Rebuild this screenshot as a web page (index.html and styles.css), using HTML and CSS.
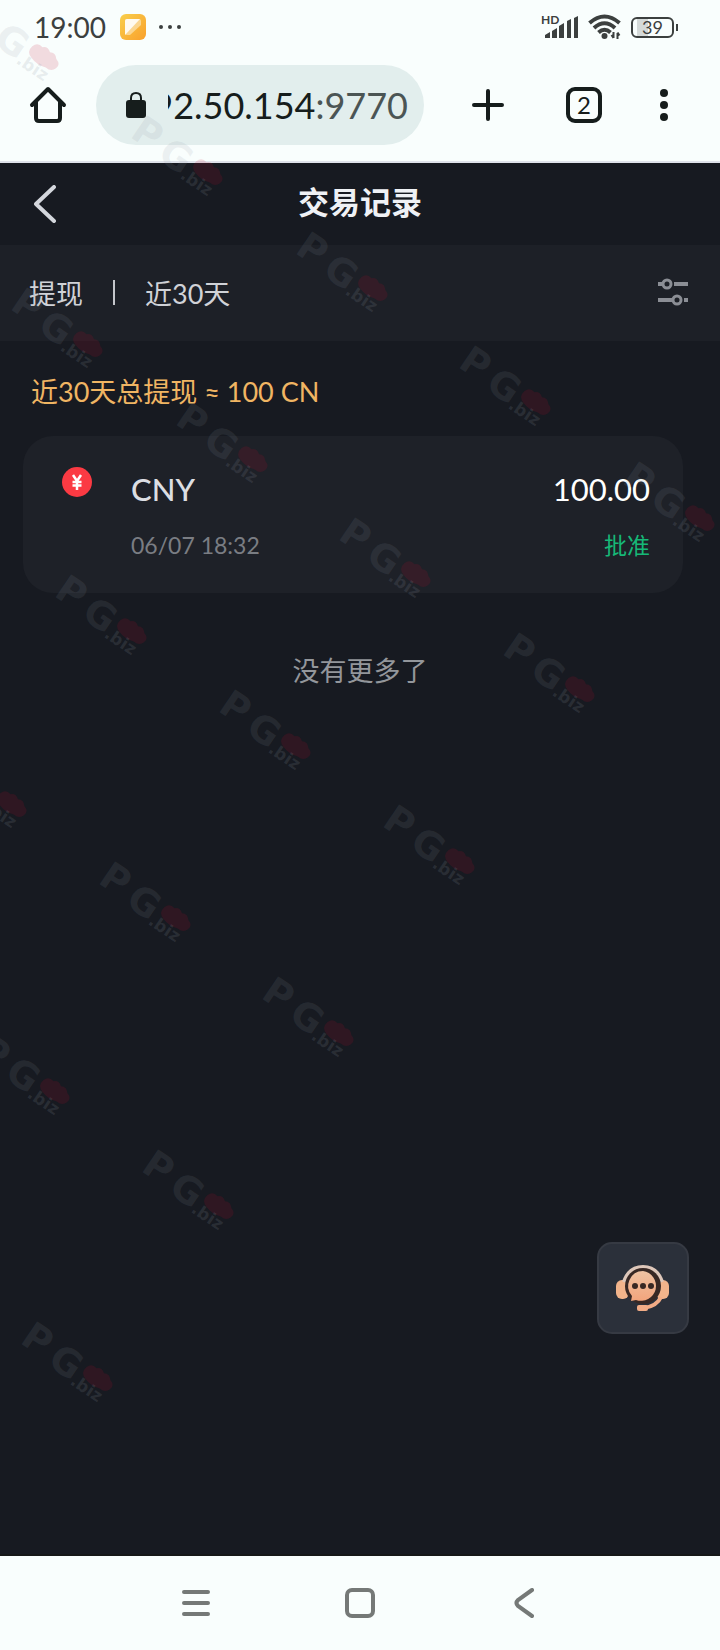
FILE: index.html
```
<!DOCTYPE html>
<html lang="zh-CN">
<head>
    <meta charset="UTF-8">
    <meta name="viewport" content="width=device-width, initial-scale=1.0">
    <title>交易记录</title>
    <link rel="stylesheet" href="styles.css">
</head>
<body>

    <!-- Phone status bar -->
    <div class="status-bar">
        <span class="status-time">19:00</span>
        <svg class="status-app" width="26" height="26" viewBox="0 0 26 26">
            <defs>
                <linearGradient id="app-bg" x1="0" y1="0" x2="1" y2="1">
                    <stop offset="0" stop-color="#f9cf4c"/>
                    <stop offset="1" stop-color="#f9a02c"/>
                </linearGradient>
            </defs>
            <rect width="26" height="26" rx="6" fill="url(#app-bg)"/>
            <path d="M5 7q0-2 2-2h12q2 0 2 2v4L10 21H7q-2 0-2-2z" fill="#fbd690"/>
            <path d="M5 7q0-2 2-2h13L5 21z" fill="#fffaf0"/>
        </svg>
        <svg width="24" height="6" viewBox="0 0 24 6" fill="#3c403f">
            <circle cx="3" cy="3" r="2"/><circle cx="12" cy="3" r="2"/><circle cx="21" cy="3" r="2"/>
        </svg>
        <div class="status-right">
            <div class="signal">
                <span class="signal-hd">HD</span>
                <svg width="36" height="24" viewBox="0 0 36 24" fill="#3c403f">
                    <path d="M2 20l5-3v6H2zM9 16l5-3v10H9zM16 11l5-3v15h-5zM24 6l4-2v19h-4zM31 3l4-2v22h-4z"/>
                </svg>
            </div>
            <svg width="34" height="26" viewBox="0 0 34 26" fill="none" stroke="#3c403f" stroke-width="4">
                <path d="M1.500 9Q16.500-4 31.500 9M6 14Q16.500 4.500 27 14M10.500 18.500Q16.500 13 22.500 18.500"/>
                <circle cx="16.500" cy="22" r="3" fill="#3c403f" stroke="none"/>
                <path d="M25.500 18v6M29.500 19v6M25.500 24l-2-3M29.500 18.500l2 3" stroke-width="2"/>
            </svg>
            <div class="battery"><span>39</span></div>
        </div>
    </div>

    <!-- Browser toolbar -->
    <div class="toolbar">
        <button class="tool-btn tool-wide" aria-label="Home">
            <svg width="38" height="38" viewBox="0 0 38 38" fill="none" stroke="#161d1c" stroke-width="4" stroke-linejoin="round" stroke-linecap="round">
                <path d="M3 19L19 3l16 16M7 16v16q0 3 3 3h18q3 0 3-3V16"/>
            </svg>
        </button>
        <button class="address" aria-label="Address">
            <svg class="lock" width="20" height="26" viewBox="0 0 20 26">
                <path d="M5 10V6q0-5 5-5t5 5v4" fill="none" stroke="#161d1c" stroke-width="2"/>
                <rect y="8" width="20" height="18" rx="3" fill="#161d1c"/>
            </svg>
            <span class="url"><span>92.50.154</span><span class="port">:9770</span></span>
        </button>
        <button class="tool-btn tool-new" aria-label="New tab">
            <svg width="32" height="32" viewBox="0 0 32 32" stroke="#161d1c" stroke-width="4" stroke-linecap="round">
                <path d="M16 2v28M2 16h28"/>
            </svg>
        </button>
        <button class="tool-btn tool-tabs" aria-label="Tabs"><span class="tab-count">2</span></button>
        <button class="tool-btn tool-wide" aria-label="Menu">
            <svg width="8" height="32" viewBox="0 0 8 32" fill="#161d1c">
                <circle cx="4" cy="4" r="4"/><circle cx="4" cy="16" r="4"/><circle cx="4" cy="28" r="4"/>
            </svg>
        </button>
    </div>

    <!-- Page -->
    <main class="page">
        <div class="header">
            <button class="back-btn" aria-label="返回">
                <svg width="22" height="38" viewBox="0 0 22 38" fill="none" stroke="#d4d7dd" stroke-width="4" stroke-linecap="round" stroke-linejoin="round">
                    <path d="M20 2L2 19l18 17"/>
                </svg>
            </button>
            <h1>交易记录</h1>
        </div>

        <div class="filter">
            <span>提现</span>
            <span class="divider"></span>
            <span>近30天</span>
            <button class="filter-btn" aria-label="筛选">
                <svg width="30" height="28" viewBox="0 0 30 28" fill="none" stroke="#8b8e95" stroke-width="4">
                    <path d="M0 6h5M16 6h14M0 22h14M26 22h4"/>
                    <circle cx="9" cy="6" r="4" stroke-width="3"/>
                    <circle cx="19" cy="22" r="4" stroke-width="3"/>
                </svg>
            </button>
        </div>

        <p class="total">近30天总提现 ≈ 100 CN</p>

        <div class="record">
            <svg class="coin" width="30" height="30" viewBox="0 0 30 30">
                <circle cx="15" cy="15" r="15" fill="#fb3a43"/>
                <path d="M11 8l4 6 4-6M15 14v9M10.500 15h9M10.500 18.500h9" fill="none" stroke="#fff" stroke-width="2.500"/>
            </svg>
            <div class="record-row">
                <span class="currency">CNY</span>
                <span class="amount">100.00</span>
            </div>
            <div class="record-row record-sub">
                <span class="date">06/07 18:32</span>
                <span class="status">批准</span>
            </div>
        </div>

        <p class="no-more">没有更多了</p>

        <button class="service-btn" aria-label="客服">
            <svg width="56" height="48" viewBox="0 0 56 48">
                <defs>
                    <linearGradient id="peach" x1="0" y1="0" x2="0" y2="1">
                        <stop offset="0" stop-color="#f0c3a3"/>
                        <stop offset="1" stop-color="#f2a47c"/>
                    </linearGradient>
                </defs>
                <rect x="1" y="16" width="13" height="19" rx="6" fill="#f2b48b"/>
                <rect x="41" y="16" width="13" height="19" rx="6" fill="#f2b48b"/>
                <path d="M9 18Q14 3 28 3t19 15" fill="none" stroke="#dec7ba" stroke-width="4"/>
                <path d="M46 33q-4 9-17 11" fill="none" stroke="#f2ac86" stroke-width="4"/>
                <rect x="22" y="41" width="11" height="6" rx="2" fill="#f2ac86"/>
                <circle cx="28" cy="22" r="18" fill="#382824"/>
                <path d="M28 7a15 15 0 1 1-7 29l-5 1 1-5A15 15 0 0 1 28 7z" fill="url(#peach)"/>
                <g fill="#382824"><circle cx="20" cy="22" r="3"/><circle cx="28" cy="22" r="3"/><circle cx="36" cy="22" r="3"/></g>
            </svg>
        </button>
    </main>

    <!-- Phone navigation -->
    <nav class="nav-bar">
        <button aria-label="Recent apps">
            <svg width="28" height="28" viewBox="0 0 28 28" stroke="#757977" stroke-width="4" stroke-linecap="round">
                <path d="M2 3h24M2 14h24M2 25h24"/>
            </svg>
        </button>
        <button aria-label="Home screen">
            <svg width="30" height="30" viewBox="0 0 30 30" fill="none" stroke="#757977" stroke-width="4">
                <rect x="2" y="2" width="26" height="26" rx="5"/>
            </svg>
        </button>
        <button aria-label="Back">
            <svg width="20" height="30" viewBox="0 0 20 30" fill="none" stroke="#757977" stroke-width="4" stroke-linecap="round">
                <path d="M18 2L4 12q-3 3 0 6l14 10"/>
            </svg>
        </button>
    </nav>

    <!-- Watermark -->
    <svg class="watermark" aria-hidden="true">
        <defs>
            <g id="mark">
                <g transform="translate(19 13) rotate(34)">
                    <text class="mark-big" x="-15" y="14">P</text>
                    <text class="mark-big" x="20" y="17">G</text>
                    <path class="mark-red" d="M55-3q2-7 9-5 4-4 9 0 5-3 9 2 7 2 5 8-2 6-9 5-9 3-17 0-8-2-6-10z"/>
                    <text class="mark-small" x="50" y="20">.biz</text>
                </g>
            </g>
        </defs>
        <use href="#mark" x="-34" y="5"/>
        <use href="#mark" x="130" y="120"/>
        <use href="#mark" x="295" y="236"/>
        <use href="#mark" x="10" y="292"/>
        <use href="#mark" x="458" y="350"/>
        <use href="#mark" x="175" y="407"/>
        <use href="#mark" x="622" y="466"/>
        <use href="#mark" x="338" y="522"/>
        <use href="#mark" x="54" y="579"/>
        <use href="#mark" x="502" y="637"/>
        <use href="#mark" x="218" y="694"/>
        <use href="#mark" x="-66" y="752"/>
        <use href="#mark" x="382" y="809"/>
        <use href="#mark" x="98" y="866"/>
        <use href="#mark" x="261" y="981"/>
        <use href="#mark" x="-23" y="1039"/>
        <use href="#mark" x="141" y="1154"/>
        <use href="#mark" x="20" y="1326"/>
    </svg>

</body>
</html>
```
FILE: styles.css
```
* {
    margin: 0;
    padding: 0;
    box-sizing: border-box;
}
body {
    position: relative;
    display: flex;
    flex-direction: column;
    min-height: 100vh;
    background-color: #f9fefd;
    font-family: Lato, "Noto Sans CJK SC", sans-serif;
    font-size: 27px;
    overflow-x: hidden;
}
button {
    border: none;
    background: none;
    font: inherit;
    cursor: pointer;
}
svg {
    display: block;
    flex-shrink: 0;
}

/* Status bar */
.status-bar {
    display: flex;
    align-items: center;
    height: 54px;
    padding: 0 42px 0 34px;
    color: #3c403f;
}
.status-time {
    font-size: 28px;
}
.status-app {
    margin: 0 12px 0 14px;
}
.status-right {
    display: flex;
    align-items: center;
    gap: 9px;
    margin-left: auto;
}
.signal {
    position: relative;
}
.signal-hd {
    position: absolute;
    left: -2px;
    top: 0;
    font-size: 12px;
    line-height: 10px;
    font-weight: 700;
}
.battery {
    position: relative;
    width: 43px;
    height: 21px;
    margin-right: 4px;
    border: 2px solid #3c403f;
    border-radius: 6px;
    background: linear-gradient(90deg, #f9fefd 4px, #d5dad9 4px, #d5dad9 15px, #f9fefd 15px);
    font-size: 18px;
    line-height: 17px;
    text-align: center;
}
.battery::after {
    content: "";
    position: absolute;
    right: -6px;
    top: 5px;
    width: 2px;
    height: 7px;
    background-color: #3c403f;
}

/* Browser toolbar */
.toolbar {
    display: flex;
    align-items: center;
    height: 109px;
    padding: 0 8px 5px 0;
    border-bottom: 2px solid #dfe2ea;
    color: #161d1c;
}
.tool-btn {
    display: flex;
    align-items: center;
    justify-content: center;
    height: 80px;
    color: inherit;
}
.tool-wide {
    width: 96px;
}
.tool-new {
    width: 128px;
}
.tool-tabs {
    width: 64px;
}
.tab-count {
    width: 36px;
    height: 36px;
    border: 4px solid #161d1c;
    border-radius: 9px;
    font-size: 24px;
    line-height: 28px;
}
.address {
    flex: 1;
    display: flex;
    align-items: center;
    min-width: 0;
    height: 80px;
    padding: 0 16px 0 30px;
    border-radius: 40px;
    background-color: #e2eeed;
    color: #161d1c;
    font-size: 36px;
}
.lock {
    margin-right: 22px;
}
.url {
    flex: 1;
    display: flex;
    justify-content: flex-end;
    min-width: 0;
    overflow: hidden;
}
.port {
    color: #4b5554;
}

/* Page */
.page {
    position: relative;
    flex: 1;
    background-color: #171a21;
    border-bottom: 2px solid #161818;
}
.header {
    position: relative;
    display: flex;
    align-items: center;
    justify-content: center;
    height: 82px;
    padding-bottom: 4px;
}
.header h1 {
    color: #eff1f5;
    font-size: 31px;
    line-height: 40px;
    font-weight: 700;
}
.back-btn {
    position: absolute;
    left: 34px;
    top: 22px;
}
.filter {
    display: flex;
    align-items: center;
    height: 96px;
    padding: 0 32px 2px 29px;
    background-color: #1d2027;
    color: #d0d2d7;
}
.divider {
    width: 2px;
    height: 25px;
    margin: 0 30px;
    background-color: #c4c6cb;
}
.filter-btn {
    margin-left: auto;
}
.total {
    padding: 31px 31px 24px;
    color: #f0b563;
    line-height: 40px;
}
.record {
    position: relative;
    margin: 0 37px 0 23px;
    padding: 33px 33px 32px 108px;
    border-radius: 30px;
    background-color: #1e2128;
}
.coin {
    position: absolute;
    left: 39px;
    top: 31px;
}
.record-row {
    display: flex;
    justify-content: space-between;
    font-size: 31px;
    line-height: 40px;
}
.record-sub {
    margin-top: 20px;
    font-size: 23px;
    line-height: 32px;
}
.currency {
    color: #dcdee3;
    font-weight: 500;
}
.amount {
    color: #fff;
}
.date {
    color: #7a7d83;
}
.status {
    color: #16b877;
}
.no-more {
    margin-top: 58px;
    color: #93969b;
    line-height: 40px;
    text-align: center;
}
.service-btn {
    position: absolute;
    right: 31px;
    bottom: 220px;
    display: flex;
    align-items: center;
    justify-content: center;
    width: 92px;
    height: 92px;
    border: 2px solid #363a43;
    border-radius: 15px;
    background-color: #2b303a;
}

/* Phone navigation */
.nav-bar {
    display: flex;
    justify-content: center;
    height: 94px;
}
.nav-bar button {
    display: flex;
    align-items: center;
    justify-content: center;
    width: 164px;
}

/* Watermark */
.watermark {
    position: absolute;
    left: 0;
    top: 0;
    width: 100%;
    height: 100%;
    pointer-events: none;
}
.mark-big {
    fill: rgba(140, 148, 160, 0.13);
    font: 700 38px "DejaVu Sans", sans-serif;
}
.mark-small {
    fill: rgba(140, 148, 160, 0.17);
    font: 700 17px "DejaVu Sans", sans-serif;
}
.mark-red {
    fill: rgba(200, 10, 45, 0.14);
}
```
